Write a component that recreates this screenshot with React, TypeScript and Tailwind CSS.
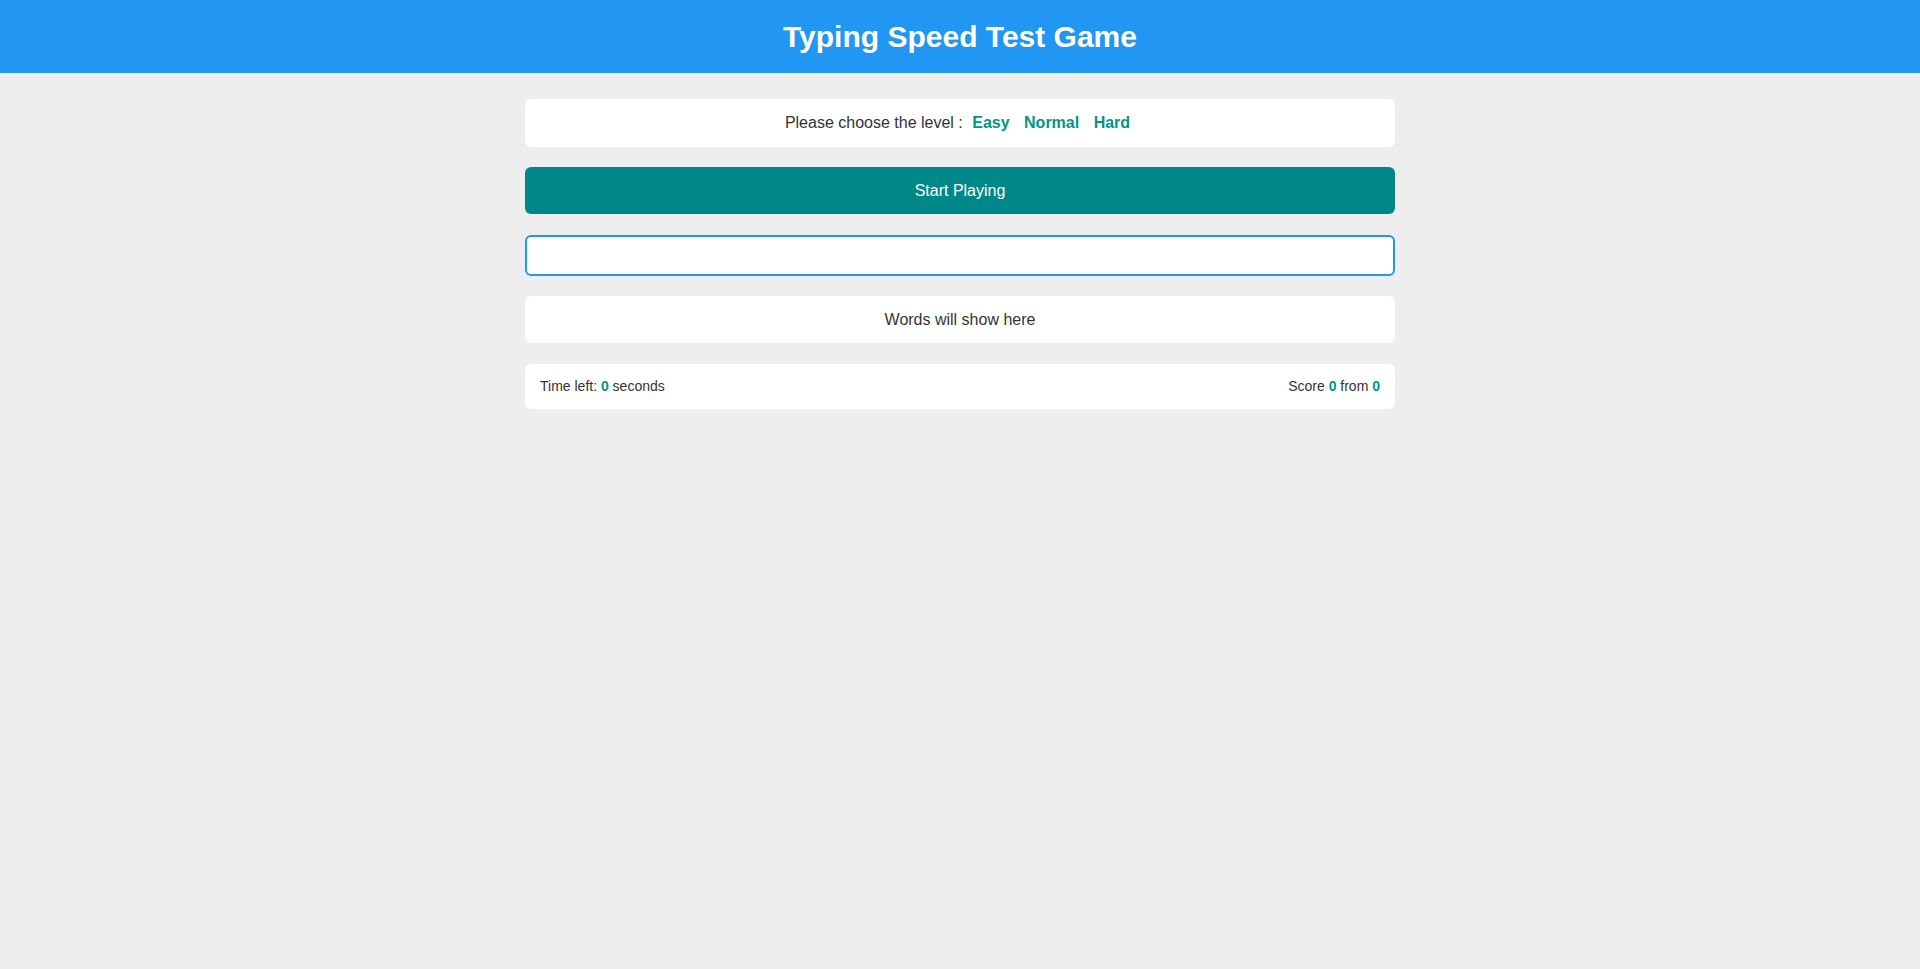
import React from "react";

const levels = ["Easy", "Normal", "Hard"];

const App = () => {
  return (
    <div className="min-h-screen bg-[#eeeeee] font-['Liberation_Sans',Arial,sans-serif] text-[#333333]">
      {/* HEADER */}
      <header className="flex h-[73px] items-center justify-center bg-[#2196f3]">
        <h1 className="text-[30px] font-bold leading-none text-white">
          Typing Speed Test Game
        </h1>
      </header>

      <main className="mx-auto flex w-[870px] flex-col pt-[26px]">
        {/* LEVEL */}
        <div className="flex h-[48px] items-center justify-center rounded-md bg-white text-[16px]">
          <span>
            Please choose the level :{" "}
            {levels.map((level, i) => (
              <React.Fragment key={level}>
                <span className="mx-[5px] inline-block font-bold text-[#009688]">
                  {level}
                </span>
                {i < levels.length - 1 ? " " : ""}
              </React.Fragment>
            ))}
          </span>
        </div>

        {/* START BUTTON */}
        <button
          type="button"
          className="mt-5 flex h-[47px] w-full items-center justify-center rounded-md bg-[#008888] text-[16px] text-white"
        >
          Start Playing
        </button>

        {/* INPUT */}
        <input
          type="text"
          className="mt-[21px] h-[41px] w-full rounded-md border-2 border-[#2196f3] bg-white px-3 text-[16px] outline-none"
        />

        {/* WORDS */}
        <div className="mt-5 flex h-[47px] items-center justify-center rounded-md bg-white text-[16px]">
          Words will show here
        </div>

        {/* STATS */}
        <div className="mt-[21px] flex h-[45px] items-center justify-between rounded-md bg-white px-[15px] text-[14px]">
          <span>
            Time left: <span className="font-bold text-[#009688]">0</span> seconds
          </span>
          <span>
            Score <span className="font-bold text-[#009688]">0</span> from{" "}
            <span className="font-bold text-[#009688]">0</span>
          </span>
        </div>
      </main>
    </div>
  );
};

export default App;
